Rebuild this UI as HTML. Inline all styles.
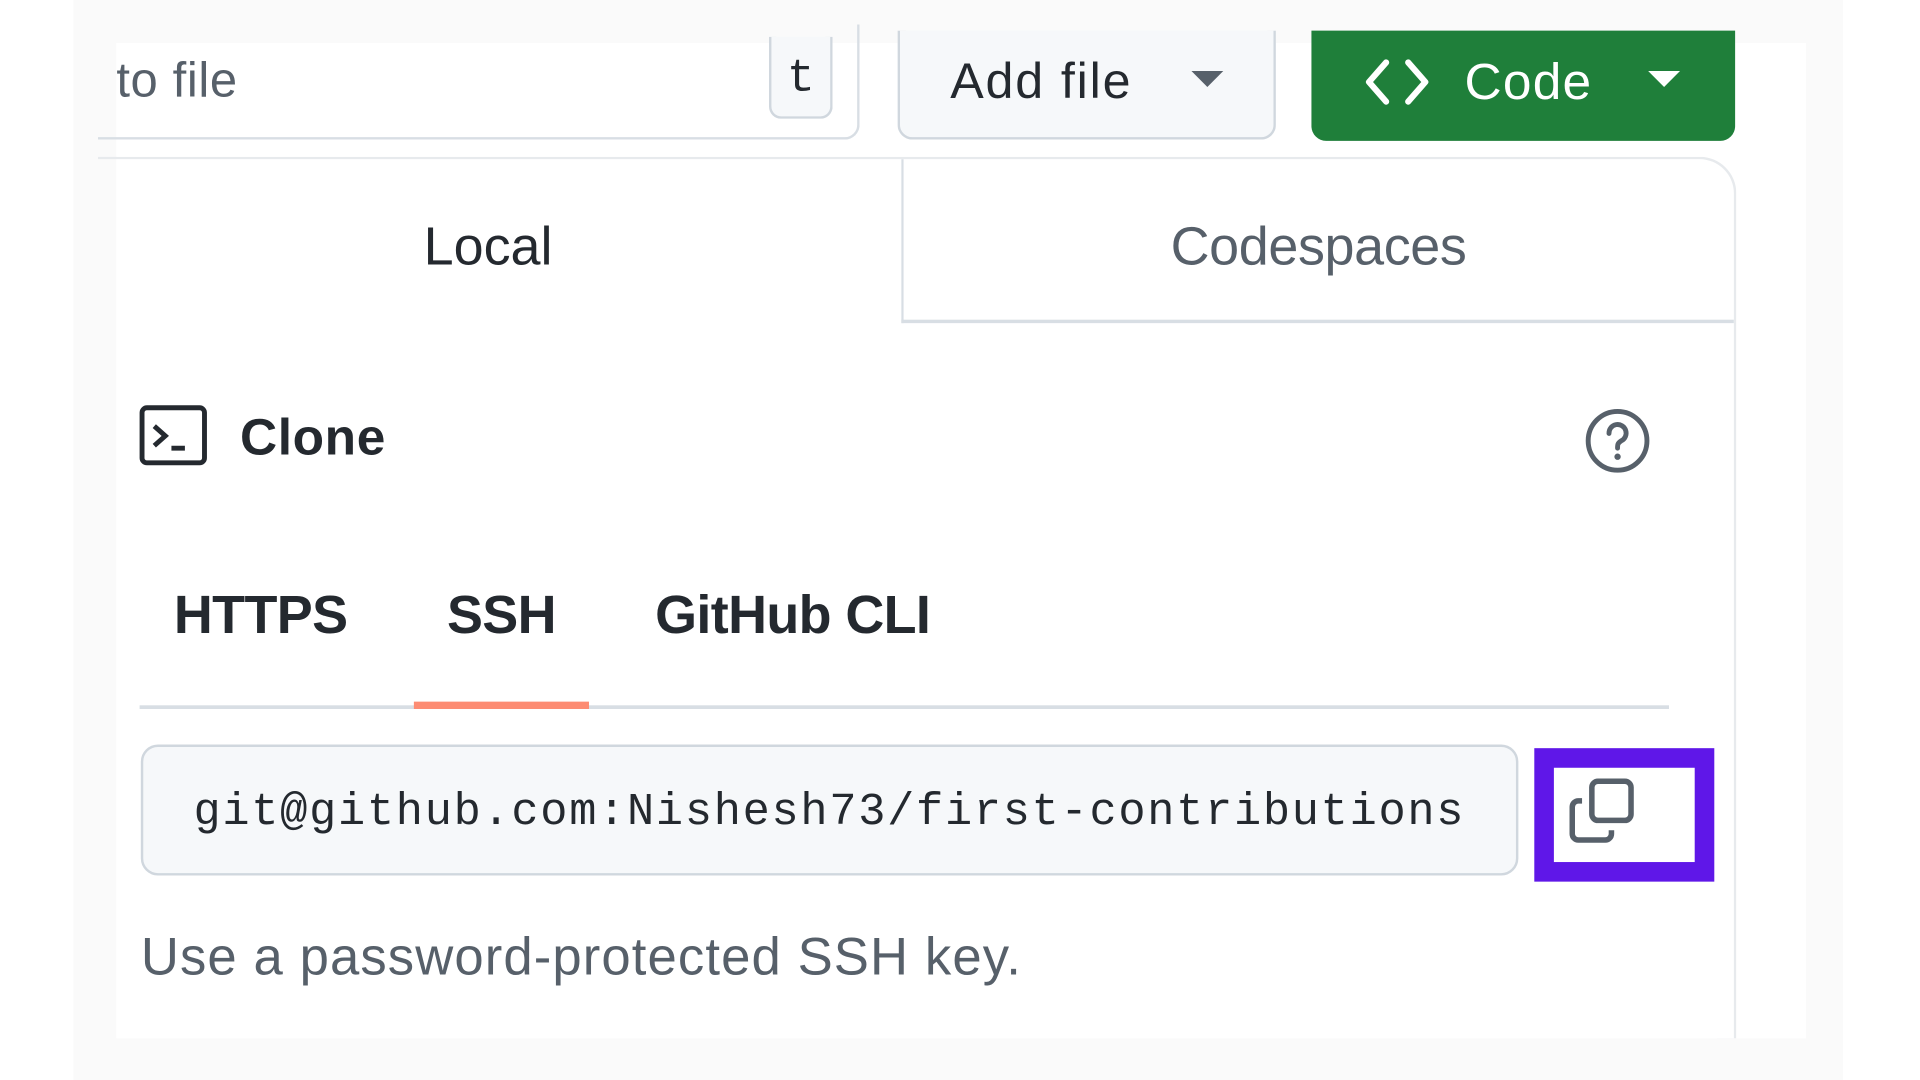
<!DOCTYPE html>
<html><head><meta charset="utf-8"><style>
html,body{margin:0;padding:0;width:1920px;height:1080px;overflow:hidden;background:#fff;}
#w{position:absolute;left:0;top:0;width:1568px;height:882px;transform:scale(1.2245);transform-origin:0 0;font-family:"Liberation Sans",sans-serif;}
.a{position:absolute;}
</style></head><body><div id="w">
<div class="a" style="left:60px;top:0;width:1445px;height:882px;background:#fafafa"></div>
<div class="a" style="left:95px;top:35px;width:1380px;height:813px;background:#fff"></div>
<!-- search -->
<div class="a" style="left:80px;top:20px;width:622px;height:94px;border:2px solid #d8dee4;border-top:none;border-radius:0 0 12px 0;box-sizing:border-box;border-left:none"></div>
<div class="a" style="left:95px;top:44px;font-size:40px;color:#57606a;letter-spacing:0.5px">to file</div>
<div class="a" style="left:628px;top:30px;width:52px;height:67px;border:2px solid #d0d7de;border-top:none;border-radius:0 0 10px 10px;box-sizing:border-box;background:#f6f8fa;font-family:'Liberation Mono',monospace;font-size:38px;text-align:center;line-height:70px;color:#24292f">t</div>
<!-- add file -->
<div class="a" style="left:733px;top:25px;width:309px;height:89px;background:#f6f8fa;border:2px solid #d0d7de;border-top:none;border-radius:0 0 12px 12px;box-sizing:border-box"></div>
<div class="a" style="left:776px;top:43px;font-size:41px;color:#24292f;letter-spacing:1.5px">Add file</div>
<div class="a" style="left:973px;top:58px;border-left:13px solid transparent;border-right:13px solid transparent;border-top:13px solid #57606a"></div>
<!-- code -->
<div class="a" style="left:1071px;top:25px;width:346px;height:90px;background:#1f7f3a;border-radius:0 0 12px 12px"></div>
<svg class="a" style="left:1112px;top:45px" width="58" height="44" viewBox="0 0 58 44"><path d="M20 6 L6 22 L20 38 M38 6 L52 22 L38 38" stroke="#fff" stroke-width="5" fill="none" stroke-linecap="round" stroke-linejoin="round"/></svg>
<div class="a" style="left:1196px;top:43px;font-size:42px;color:#fff;letter-spacing:1px">Code</div>
<div class="a" style="left:1346px;top:58px;border-left:13px solid transparent;border-right:13px solid transparent;border-top:13px solid #fff"></div>
<!-- panel -->
<div class="a" style="left:80px;top:128px;width:1338px;height:720px;border:2px solid #e7eaed;border-radius:0 30px 0 0;box-sizing:border-box;border-left:none;border-bottom:none"></div>
<div class="a" style="left:736px;top:130px;width:680px;height:134px;border-left:2px solid #d8dee4;border-bottom:3px solid #d8dee4;box-sizing:border-box;border-radius:0 28px 0 0"></div>
<div class="a" style="left:346px;top:177px;font-size:44px;color:#24292f">Local</div>
<div class="a" style="left:956px;top:177px;font-size:44px;color:#57606a;letter-spacing:-0.3px">Codespaces</div>
<!-- clone -->
<svg class="a" style="left:113px;top:330px" width="58" height="52" viewBox="0 0 58 52"><rect x="3" y="3" width="51" height="45" rx="4" fill="none" stroke="#24292f" stroke-width="4"/><path d="M13 18 L22 26 L13 34" stroke="#24292f" stroke-width="4" fill="none"/><path d="M27 36 H38" stroke="#24292f" stroke-width="4"/></svg>
<div class="a" style="left:196px;top:333px;font-size:42px;font-weight:bold;color:#24292f;letter-spacing:0.5px">Clone</div>
<svg class="a" style="left:1293px;top:332px" width="56" height="56" viewBox="0 0 56 56"><circle cx="28" cy="28" r="24" fill="none" stroke="#57606a" stroke-width="4"/><path d="M21 22 a7 7 0 1 1 10 6 c-3 2 -3 3 -3 6" fill="none" stroke="#57606a" stroke-width="4" stroke-linecap="round"/><circle cx="28" cy="41" r="2.6" fill="#57606a"/></svg>
<div class="a" style="left:142px;top:478px;font-size:44px;font-weight:bold;color:#24292f;letter-spacing:-0.5px">HTTPS</div>
<div class="a" style="left:365px;top:478px;font-size:44px;font-weight:bold;color:#24292f;letter-spacing:-0.5px">SSH</div>
<div class="a" style="left:535px;top:478px;font-size:44px;font-weight:bold;color:#24292f;letter-spacing:-0.5px">GitHub CLI</div>
<div class="a" style="left:114px;top:576px;width:1249px;height:3px;background:#d8dee4"></div>
<div class="a" style="left:338px;top:573px;width:143px;height:6px;background:#fd8c73"></div>
<!-- input -->
<div class="a" style="left:115px;top:608px;width:1125px;height:107px;background:#f6f8fa;border:2px solid #d0d7de;border-radius:14px;box-sizing:border-box;overflow:hidden"><div style="position:absolute;left:41px;top:33px;width:1041px;overflow:hidden;font-family:'Liberation Mono',monospace;font-size:37px;color:#24292f;white-space:nowrap;letter-spacing:1.4px">git@github.com:Nishesh73/first-contributions.git</div></div>
<div class="a" style="left:1253px;top:611px;width:147px;height:109px;border:16px solid #5f17e8;box-sizing:border-box;background:#fff"></div>
<svg class="a" style="left:1280px;top:634px" width="58" height="56" viewBox="0 0 58 56"><rect x="20" y="4" width="32" height="32" rx="5" fill="none" stroke="#57606a" stroke-width="4.5"/><path d="M12 20 h-3 a5 5 0 0 0 -5 5 v22 a5 5 0 0 0 5 5 h22 a5 5 0 0 0 5 -5 v-3" fill="none" stroke="#57606a" stroke-width="4.5"/></svg>
<div class="a" style="left:115px;top:758px;font-size:43px;color:#57606a;letter-spacing:0.9px">Use a password-protected SSH key.</div>
</div></body></html>
